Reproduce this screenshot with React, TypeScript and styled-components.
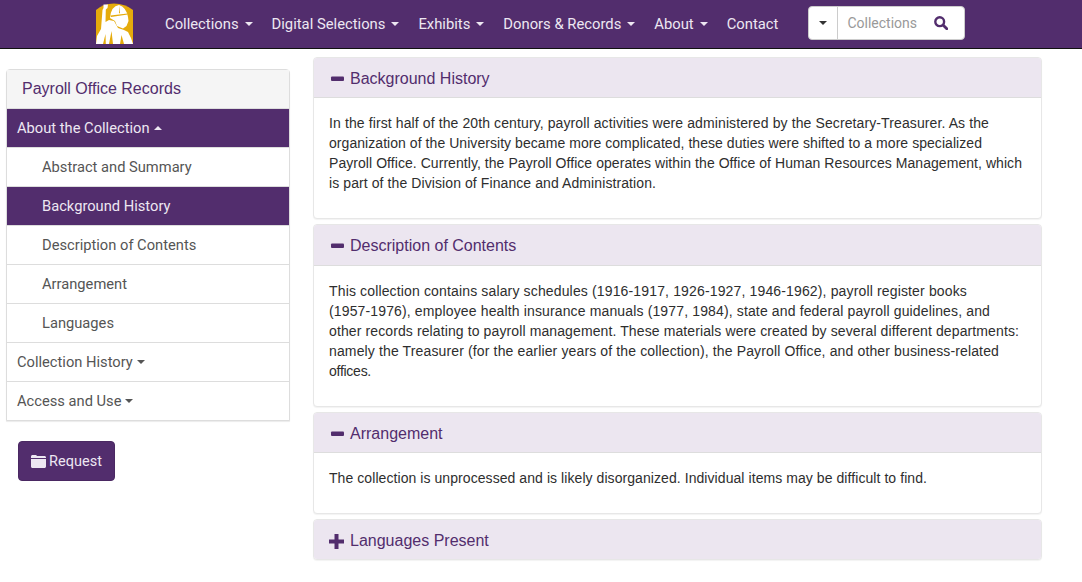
import React, { useLayoutEffect, useRef } from "react";
import styled, { createGlobalStyle } from "styled-components";

const Global = createGlobalStyle`
  html, body { margin: 0; padding: 0; background: #fff; }
  body { font-family: "Liberation Sans", Arial, sans-serif; font-size: 14px; line-height: 20px; color: #333; }
  * { box-sizing: border-box; }
`;
const Page = styled.div`width: 1082px; height: 582px; overflow: hidden;`;
const Nav = styled.header`
  height: 49px; background: #522d6d; border-bottom: 1px solid #111;
  display: flex; align-items: flex-start; padding-left: 95px;
`;
const LogoBox = styled.div`width: 39px; height: 42px; margin-top: 3px; margin-right: 31px; flex: none;`;
const NavList = styled.nav`display: flex; height: 48px; align-items: center; gap: 19px;`;
const NavLink = styled.a`
  font-family: Roboto, sans-serif; font-size: 14.8px; color: #ede7f2; display: flex; align-items: center; white-space: nowrap;
`;
const Caret = styled.span<{ $up?: boolean; $color?: string; $gap?: number }>`
  display: inline-block; width: 0; height: 0; margin-left: ${p => p.$gap ?? 6}px;
  border-left: 4px solid transparent; border-right: 4px solid transparent;
  ${p => p.$up ? `border-bottom: 4px solid ${p.$color ?? "#ede7f2"};` : `border-top: 4px solid ${p.$color ?? "#ede7f2"};`}
`;
const Search = styled.div`
  margin: 6px 0 0 30px; width: 157px; height: 34px; background: #fff; border: 1px solid #ccc; border-radius: 4px;
  display: flex; align-items: center; flex: none;
`;
const SearchDrop = styled.div`width: 29px; height: 100%; border-right: 1px solid #ccc; display: flex; align-items: center; justify-content: center; & > span { margin: 0; }`;
const SearchText = styled.span`font-family: Roboto, sans-serif; font-size: 14px; color: #999; margin-left: 9px; width: 87px;`;
const Content = styled.div`display: grid; grid-template-columns: 284px 729px; column-gap: 23px; padding-left: 6px;`;
const Side = styled.aside`padding-top: 20px;`;
const Menu = styled.div`border: 1px solid #ddd; border-radius: 4px 4px 0 0; background: #fff; box-shadow: 0 1px 1px rgba(0,0,0,.08);`;
const MenuHead = styled.div`
  height: 39px; background: #f5f5f5; border-bottom: 1px solid #ddd; padding-left: 15px;
  display: flex; align-items: center; font-size: 16px; color: #522d6d;
`;
const MenuRow = styled.div<{ $active?: boolean; $sub?: boolean }>`
  height: 39px; display: flex; align-items: center; padding-left: ${p => p.$sub ? 35 : 10}px;
  font-family: Roboto, sans-serif; font-size: 14.7px;
  background: ${p => p.$active ? "#522d6d" : "#fff"}; color: ${p => p.$active ? "#ede7f2" : "#555"};
  border-bottom: 1px solid #ddd;
  &:last-child { border-bottom: 0; height: 38px; }
`;
const RequestBtn = styled.button`
  margin: 20px 0 0 12px; width: 97px; height: 40px; background: #522d6d; border: 1px solid #4a2862; border-radius: 4px;
  display: flex; align-items: center; justify-content: center; gap: 3px; color: #ede7f2;
  font-family: Roboto, sans-serif; font-size: 14.5px; padding: 0;
`;
const Main = styled.main`padding-top: 8px; display: flex; flex-direction: column; gap: 5px;`;
const Panel = styled.section<{ $h: number }>`
  height: ${p => p.$h}px; border: 1px solid #e7e7e7; border-radius: 4px; background: #fff;
  box-shadow: 0 1px 1px rgba(0,0,0,.05); overflow: hidden;
`;
const PanelHead = styled.div<{ $h: number; $shift: number }>`
  height: ${p => p.$h}px; background: #ece6f0; border-bottom: 1px solid #ddd; margin: -1px -1px 0; padding: ${p => p.$shift}px 0 0 17px;
  display: flex; align-items: center; gap: 6px; font-size: 16px; color: #522d6d;
`;
const PanelBody = styled.div`padding: 15px 0 0 15px; font-size: 14px; line-height: 20px; color: #2e2e2e;`;
const LineText = styled.span`display: block; width: max-content; white-space: nowrap;`;
const PlusWrap = styled.span`display: flex; margin-left: -1px;`;

const FitLine = ({ text, width }: { text: string; width: number }) => {
  const ref = useRef<HTMLSpanElement>(null);
  useLayoutEffect(() => {
    const el = ref.current;
    if (!el) return;
    const natural = el.getBoundingClientRect().width;
    el.style.letterSpacing = `${(width - natural) / text.length}px`;
  }, [text, width]);
  return <LineText ref={ref}>{text}</LineText>;
};

const Logo = () => (
  <svg width="39" height="42" viewBox="0 0 39 42">
    <path d="M1 7Q8 .5 19 .5T38 7V41H1Z" fill="#e5ab0c" />
    <path d="M8.5 1.5L13 1.5 12.5 5 10.8 6.5 10.5 19 14 17 19 18 23 25 29 27 33 29 36 35 38 41H1L2 33 6 26 7.5 7 8.5 5Z" fill="#fff" />
    <path d="M15 15Q16 3 24 2 31 4 33 14L33.5 18 31.5 23 28 25.5 22 23 20 18Z" fill="#fff" />
    <path d="M15.5 12.5L32.5 10.5 32.7 11.5 16 14ZM14 41L16.5 28 18 41ZM25 41L26.5 32 29 41ZM8 41L10.5 31 10.8 41ZM24 2.5L25 10 24 10.5Z" fill="#e5ab0c" />
  </svg>
);
const MagIcon = () => (
  <svg width="14" height="14" viewBox="0 0 14 14">
    <circle cx="5.7" cy="5.7" r="4.4" fill="none" stroke="#522d6d" strokeWidth="2.4" />
    <path d="M9 9l3.8 3.8" stroke="#522d6d" strokeWidth="2.8" strokeLinecap="round" />
  </svg>
);
const Minus = () => <svg width="14" height="14" viewBox="0 0 14 14"><rect x="1" y="4.5" width="13" height="4.5" rx="1" fill="#522d6d" /></svg>;
const Plus = () => <svg width="15" height="15" viewBox="0 0 15 15"><path d="M5.5 0h4v5.5H15v4H9.5V15h-4V9.5H0v-4h5.5z" fill="#522d6d" /></svg>;
const Folder = () => <svg width="15" height="13" viewBox="0 0 15 13"><path d="M0 3V1.5C0 .7.7 0 1.5 0h3C5.3 0 6 .7 6 1h7.5c.8 0 1.5.7 1.5 1.5V3zM0 4h15v7.5c0 .8-.7 1.5-1.5 1.5h-12C.7 13 0 12.3 0 11.5z" fill="#ede7f2" /></svg>;

const navItems = [["Collections", true], ["Digital Selections", true], ["Exhibits", true], ["Donors & Records", true], ["About", true], ["Contact", false]] as const;
const panels: { title: string; open: boolean; h: number; head: number; shift: number; lines: [string, number][] }[] = [
  { title: "Background History", open: true, h: 162, head: 41, shift: 4, lines: [
    ["In the first half of the 20th century, payroll activities were administered by the Secretary-Treasurer. As the", 660],
    ["organization of the University became more complicated, these duties were shifted to a more specialized", 653],
    ["Payroll Office. Currently, the Payroll Office operates within the Office of Human Resources Management, which", 693],
    ["is part of the Division of Finance and Administration.", 327],
  ] },
  { title: "Description of Contents", open: true, h: 183, head: 42, shift: 2, lines: [
    ["This collection contains salary schedules (1916-1917, 1926-1927, 1946-1962), payroll register books", 638],
    ["(1957-1976), employee health insurance manuals (1977, 1984), state and federal payroll guidelines, and", 661],
    ["other records relating to payroll management. These materials were created by several different departments:", 690],
    ["namely the Treasurer (for the earlier years of the collection), the Payroll Office, and other business-related", 670],
    ["offices.", 42],
  ] },
  { title: "Arrangement", open: true, h: 102, head: 41, shift: 4, lines: [
    ["The collection is unprocessed and is likely disorganized. Individual items may be difficult to find.", 598],
  ] },
  { title: "Languages Present", open: false, h: 41, head: 41, shift: 4, lines: [] },
];

export default function App() {
  return (
    <Page>
      <Global />
      <Nav>
        <LogoBox><Logo /></LogoBox>
        <NavList>
          {navItems.map(([t, c]) => <NavLink key={t}>{t}{c && <Caret />}</NavLink>)}
        </NavList>
        <Search>
          <SearchDrop><Caret $color="#333" /></SearchDrop>
          <SearchText>Collections</SearchText>
          <MagIcon />
        </Search>
      </Nav>
      <Content>
        <Side>
          <Menu>
            <MenuHead>Payroll Office Records</MenuHead>
            <MenuRow $active>About the Collection<Caret $up $gap={4} /></MenuRow>
            <MenuRow $sub>Abstract and Summary</MenuRow>
            <MenuRow $sub $active>Background History</MenuRow>
            <MenuRow $sub>Description of Contents</MenuRow>
            <MenuRow $sub>Arrangement</MenuRow>
            <MenuRow $sub>Languages</MenuRow>
            <MenuRow>Collection History<Caret $color="#555" $gap={4} /></MenuRow>
            <MenuRow>Access and Use<Caret $color="#555" $gap={4} /></MenuRow>
          </Menu>
          <RequestBtn><Folder />Request</RequestBtn>
        </Side>
        <Main>
          {panels.map(p => (
            <Panel key={p.title} $h={p.h}>
              <PanelHead $h={p.head} $shift={p.shift}>{p.open ? <Minus /> : <PlusWrap><Plus /></PlusWrap>}{p.title}</PanelHead>
              {p.lines.length > 0 && <PanelBody>{p.lines.map(([t, w]) => <FitLine key={t} text={t} width={w} />)}</PanelBody>}
            </Panel>
          ))}
        </Main>
      </Content>
    </Page>
  );
}
